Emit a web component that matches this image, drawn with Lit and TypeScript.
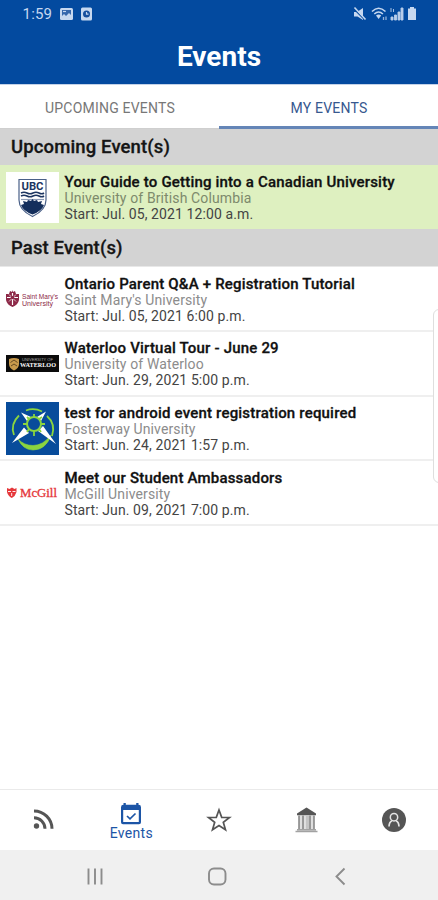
import { LitElement, html, css, svg, TemplateResult } from "lit";
import { customElement, property } from "lit/decorators.js";

interface EventItem {
  title: string;
  school: string;
  start: string;
  logo: TemplateResult;
}

const ubcLogo = html`<svg width="53" height="51" viewBox="0 0 53 51">
  <rect width="53" height="51" fill="#fff" />
  <path d="M13 7.500H40V28Q40 38 26.500 44.500Q13 38 13 28Z" fill="#fff" stroke="#4a6088" stroke-width="1.200" />
  <text x="26.500" y="17.500" text-anchor="middle" textLength="22" lengthAdjust="spacingAndGlyphs" font-family="Roboto, sans-serif" font-weight="700" font-size="11.500" fill="#1c3561">UBC</text>
  <path d="M15 21q3-1.500 6 0t6 0t6 0t5 0M15 24q3-1.500 6 0t6 0t6 0t5 0" fill="none" stroke="#1c3561" stroke-width="1.600" />
  <path d="M15 27.500h23" stroke="#8e9db8" stroke-width="1.200" />
  <path d="M15 33l3-1-1-3 4 1 1-2 3 1 1.500-2 1.500 2 3-1 1 2 4-1-1 3 3 1Q36 39 26.500 42.500Q17 39 15 33Z" fill="#142f5c" />
</svg>`;

const saintMarysLogo = html`<svg width="53" height="18" viewBox="0 0 53 18">
  <path d="M0 4h3l1-3 2 1 .5-2 .5 2 2-1 1 3h3v6q-1 5-6.500 7Q1 15 0 10Z" fill="#8d2948" />
  <path d="M6.500 3v12M1 7.500h11" stroke="#fff" stroke-width="1.200" />
  <path d="M3 4.500l7 7M10 4.500l-7 7" stroke="#fff" stroke-width=".7" />
  <circle cx="6.500" cy="7.500" r="1.800" fill="#8d2948" />
  <text x="16" y="8.500" textLength="36" lengthAdjust="spacingAndGlyphs" font-family="Liberation Sans, sans-serif" font-size="6.500" fill="#8d2948">Saint Mary's</text>
  <text x="16" y="15.500" textLength="31" lengthAdjust="spacingAndGlyphs" font-family="Liberation Sans, sans-serif" font-size="6.500" fill="#8d2948">University</text>
</svg>`;

const waterlooLogo = html`<svg width="53" height="17" viewBox="0 0 53 17">
  <rect width="53" height="17" fill="#0b0b0b" />
  <path d="M3 4q5-2 10 0v5q0 4-5 6.500Q3 13 3 9Z" fill="#c99a4c" />
  <path d="M4.500 7.500L8 5l3.500 2.500M5 11l3-2 3 2" fill="none" stroke="#4b3317" stroke-width=".8" />
  <text x="16" y="5.500" textLength="31" lengthAdjust="spacingAndGlyphs" font-family="Liberation Sans, sans-serif" font-size="3" fill="#a9a9a9">UNIVERSITY OF</text>
  <text x="14" y="12" textLength="36" lengthAdjust="spacingAndGlyphs" font-family="Liberation Serif, serif" font-weight="700" font-size="7" fill="#fff">WATERLOO</text>
</svg>`;

const fosterwayLogo = html`<svg width="53" height="53" viewBox="0 0 53 53">
  <rect width="53" height="53" fill="#084c9b" />
  <path d="M8 33Q4 22 13 13.500M20 8.500Q28 5.500 36 9.500M41 14Q50 22 46 34" fill="none" stroke="#8bd53f" stroke-width="1.800" />
  <path d="M12 37Q18 43.500 27 43.500Q37 43.500 45 33Q40 48 27 48Q17 48 12 37Z" fill="#8bd53f" stroke="#8bd53f" stroke-width=".6" />
  <path d="M15 10.500L25 15 21 19ZM40 9.500L35 19 31 15ZM18 25.500L6 41 23 31ZM32 29L50 42 37 24Z" fill="#fff" />
  <circle cx="28" cy="22" r="7" fill="#084c9b" stroke="#8bd53f" stroke-width="2" />
  <path d="M28 15v-3M28 29v5M21 22h-4M35 22h4M23 17l-2-2M33 17l3-2M23 27l-2 3M33 27l2 3" stroke="#8bd53f" stroke-width="1.800" />
</svg>`;

const mcgillLogo = html`<svg width="53" height="16" viewBox="0 0 53 16">
  <path d="M1 3l2.500 1L6 2.500 8.500 4 10.500 3v4q-1 4-4.700 6Q2 11 1 7Z" fill="#e5383b" />
  <path d="M2 6.500h3M6.500 6.500h3M5.700 8v3" stroke="#fff" stroke-width=".9" />
  <text x="14" y="12" textLength="37" lengthAdjust="spacingAndGlyphs" font-family="Liberation Serif, serif" font-size="11.500" fill="#e5383b" stroke="#e5383b" stroke-width=".3">McGill</text>
</svg>`;

const upcoming: EventItem[] = [
  { title: "Your Guide to Getting into a Canadian University", school: "University of British Columbia", start: "Jul. 05, 2021 12:00 a.m.", logo: ubcLogo },
];

const past: EventItem[] = [
  { title: "Ontario Parent Q&A + Registration Tutorial", school: "Saint Mary's University", start: "Jul. 05, 2021 6:00 p.m.", logo: saintMarysLogo },
  { title: "Waterloo Virtual Tour - June 29", school: "University of Waterloo", start: "Jun. 29, 2021 5:00 p.m.", logo: waterlooLogo },
  { title: "test for android event registration required", school: "Fosterway University", start: "Jun. 24, 2021 1:57 p.m.", logo: fosterwayLogo },
  { title: "Meet our Student Ambassadors", school: "McGill University", start: "Jun. 09, 2021 7:00 p.m.", logo: mcgillLogo },
];

@customElement("event-row")
export class EventRow extends LitElement {
  @property({ attribute: false }) item!: EventItem;

  static styles = css`
    :host { display: flex; align-items: center; box-sizing: border-box; height: 64.800px; padding-left: 6px; gap: 5.500px; border-bottom: 2px solid #efefef; background: #fff; }
    :host([highlighted]) { background: #def0c0; border-bottom: 0; height: 64px; }
    .logo { width: 53px; flex: none; display: flex; justify-content: center; padding-top: 1px; }
    :host([highlighted]) .logo { padding-top: 0; }
    .logo svg { display: block; }
    .info { white-space: nowrap; padding-top: 3.500px; }
    .title { font-size: 15px; line-height: 16px; font-weight: 500; color: #111; -webkit-text-stroke: 0.300px #111; letter-spacing: 0.190px; }
    .school { font-size: 14px; line-height: 16px; color: #8c8c8c; letter-spacing: 0.120px; }
    .start { font-size: 14px; line-height: 17px; color: #444; letter-spacing: 0.100px; }
    :host([highlighted]) .school { color: #7d8a6c; }
  `;

  render() {
    return html`<div class="logo">${this.item.logo}</div>
      <div class="info">
        <div class="title">${this.item.title}</div>
        <div class="school">${this.item.school}</div>
        <div class="start">Start: ${this.item.start}</div>
      </div>`;
  }
}

const statusLeft = html`<svg width="34" height="16" viewBox="0 0 34 16">
  <rect x="1" y="2" width="13" height="12" rx="1.500" fill="#c6d8f0" />
  <path d="M3 4h9v5l-2-2-3 3-2-2-2 2Z" fill="#3567ac" />
  <path d="M4 5.500h3" stroke="#c6d8f0" stroke-width="1.200" />
  <rect x="22" y="1.500" width="11" height="13" rx="1.500" fill="#c6d8f0" />
  <circle cx="27.500" cy="8" r="3.500" fill="#164f9d" />
  <path d="M27.500 6v2.200h2" fill="none" stroke="#c6d8f0" stroke-width="1.200" />
</svg>`;

const statusRight = html`<svg width="66" height="16" viewBox="0 0 66 16">
  <path d="M2 6h3l6-4v12L5.500 10.500H2Z" fill="#c6d8f0" />
  <path d="M2 3l12 12" stroke="#034a9f" stroke-width="1.400" />
  <path d="M2.500 1.500l11 12" stroke="#c6d8f0" stroke-width="1.600" />
  <path d="M20 5.500Q26.500-1 33.500 5.500M22.300 8q4.300-4 8.600 0" fill="none" stroke="#c6d8f0" stroke-width="1.600" />
  <path d="M24 9.500q2.600-2 5.200 0L26.600 13Z" fill="#c6d8f0" />
  <path d="M31.500 11v3M34 10.500v3.500" stroke="#93b2dc" stroke-width="1.300" />
  <path d="M39 2v4M41.500 3v3M39 11h2v3h-2ZM42.500 9h2v5h-2ZM46 6h2v8h-2ZM49 2h2v12h-2Z" fill="#b8cdea" stroke="#b8cdea" stroke-width=".9" />
  <path d="M57 2.500h2V1h4v1.500h2V14h-8Z" transform="translate(-1)" fill="#c6d8f0" />
</svg>`;

const navIcons = {
  feed: svg`<circle cx="4.500" cy="18" r="2.700" /><path d="M2 9.800a11 11 0 0 1 11 10.900M2 2.900a18 18 0 0 1 18 17.800" fill="none" stroke="currentColor" stroke-width="3" />`,
  events: svg`<path d="M4.500 2h2.300v1.800h10.400V2h2.300v1.800q2.500 0 2.500 2.400v15q0 2-2 2H4q-2 0-2-2v-15q0-2.400 2.500-2.400ZM4.200 9v12h15.600V9Z" fill-rule="evenodd" /><path d="M8 15l3 2.800 5.500-5.300" fill="none" stroke="currentColor" stroke-width="1.700" />`,
  star: svg`<path d="M12 2l2.700 7.300 7.800.2-6.200 4.800 2.200 7.500L12 17.500l-6.500 4.300 2.200-7.500L1.500 9.500l7.800-.2Z" fill="none" stroke="currentColor" stroke-width="1.700" stroke-linejoin="miter" />`,
  museum: svg`<path d="M11.500 -.5l9.500 6v1.700H2V5.500Z" /><path d="M3.500 7.200h16v14.600h-16Z" fill="#c4c4c4" /><path d="M4 7.500v14M19 7.500v14M8 7.500v14M15 7.500v14" stroke="#858585" stroke-width="1.400" /><path d="M6 8v13M17 8v13M10 8v13" stroke="#ededed" stroke-width="1.300" /><path d="M2 21.800h19M.5 23.500h22" stroke="#a2a2a2" stroke-width="1.400" />`,
  profile: svg`<circle cx="12" cy="12" r="12" /><circle cx="12" cy="9.200" r="3.700" fill="none" stroke="#e4e4e4" stroke-width="1.500" /><path d="M7 18.500q.2-4.700 3-5.800M17 18.500q-.2-4.700-3-5.800" fill="none" stroke="#e4e4e4" stroke-width="1.700" />`,
};

@customElement("app-root")
export class AppRoot extends LitElement {
  static styles = css`
    :host { display: flex; flex-direction: column; position: relative; width: 438px; height: 900px; overflow: hidden; background: #fff; font-family: Roboto, "Liberation Sans", sans-serif; }
    header { height: 85px; flex: none; background: #034a9f; color: #fff; border-bottom: 1px solid #c3d2e8; box-sizing: border-box; }
    .status { height: 28px; display: flex; align-items: center; padding: 0 20px 0 22.500px; color: #c6d8f0; font-size: 15px; letter-spacing: 0.200px; box-sizing: border-box; }
    .status svg { display: block; }
    .status .left { margin-left: 7px; }
    .status .right { margin-left: auto; }
    h1 { margin: 0; height: 58px; line-height: 58px; text-align: center; font-size: 28px; font-weight: 700; }
    .tabs { display: flex; height: 44px; flex: none; }
    .tab { flex: 1; display: flex; align-items: center; justify-content: center; font-size: 14px; letter-spacing: 0.200px; color: #777; border-bottom: 1px solid #cfcfcf; box-sizing: border-box; padding: 2px 0 0 1px; }
    .tab.active { color: #37588f; border-bottom: 3px solid #6485b7; padding-top: 4px; }
    h2 { margin: 0; height: 36px; line-height: 37px; flex: none; padding-left: 11px; background: #d3d3d3; font-size: 18.500px; font-weight: 500; color: #151515; letter-spacing: 0.130px; -webkit-text-stroke: 0.300px #151515; }
    h2.past { height: 38px; line-height: 39px; border-bottom: 1px solid #e8e8e8; box-sizing: border-box; }
    main { flex: 1; min-height: 0; }
    .edge { position: absolute; left: 433px; top: 309px; width: 20px; height: 174px; border: 1.500px solid #dedede; border-radius: 6px; background: #fff; box-sizing: border-box; }
    nav { display: flex; height: 61px; flex: none; border-top: 1px solid #eaeaea; box-sizing: border-box; color: #555; }
    .item { flex: 1; display: flex; flex-direction: column; align-items: center; justify-content: center; font-size: 14px; letter-spacing: 0.300px; }
    .item svg { display: block; fill: currentColor; overflow: visible; }
    .item.active { color: #1c55a6; padding-top: 1px; }
    .system { height: 50px; flex: none; background: #f0f0f0; display: flex; }
    .system svg { display: block; }
  `;

  render() {
    return html`
      <header>
        <div class="status"><span>1:59</span><span class="left">${statusLeft}</span><span class="right">${statusRight}</span></div>
        <h1>Events</h1>
      </header>
      <div class="tabs"><div class="tab">UPCOMING EVENTS</div><div class="tab active">MY EVENTS</div></div>
      <main>
        <h2>Upcoming Event(s)</h2>
        ${upcoming.map((e) => html`<event-row highlighted .item=${e}></event-row>`)}
        <h2 class="past">Past Event(s)</h2>
        ${past.map((e) => html`<event-row .item=${e}></event-row>`)}
      </main>
      <div class="edge"></div>
      <nav>
        <div class="item">${this.icon(navIcons.feed)}</div>
        <div class="item active">${this.icon(navIcons.events)}<span>Events</span></div>
        <div class="item">${this.icon(navIcons.star)}</div>
        <div class="item">${this.icon(navIcons.museum)}</div>
        <div class="item">${this.icon(navIcons.profile)}</div>
      </nav>
      <div class="system">
        <svg width="438" height="50" viewBox="0 0 438 50" fill="none" stroke="#8c8c8c" stroke-width="1.900">
          <path d="M88.500 18.500v16M95 18.500v16M101.500 18.500v16" />
          <rect x="209" y="18.500" width="16.500" height="16" rx="5" />
          <path d="M344.500 18.500l-8 8 8 8" />
        </svg>
      </div>`;
  }

  private icon(shape: unknown) {
    return html`<svg width="24" height="24" viewBox="0 0 24 24">${shape}</svg>`;
  }
}
